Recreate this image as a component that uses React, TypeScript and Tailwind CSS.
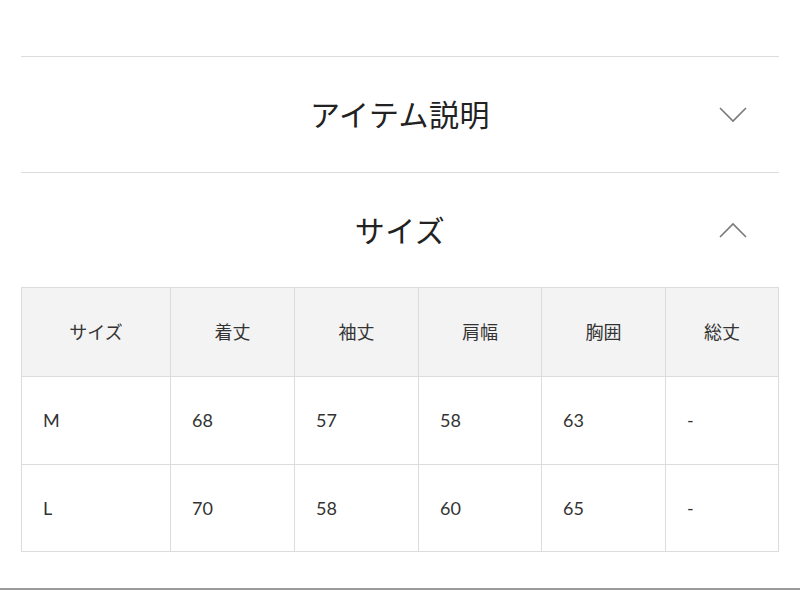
import React from "react";

const font = { fontFamily: 'Lato, "Noto Sans CJK JP", sans-serif' };

function Chevron({ up }: { up?: boolean }) {
  return (
    <svg width="28" height="16" viewBox="0 0 28 16" className="absolute right-[32px] top-1/2 -translate-y-1/2">
      {up ? (
        <polyline points="1,15 14,2 27,15" fill="none" stroke="#7a7a7a" strokeWidth="1.6" />
      ) : (
        <polyline points="1,1 14,14 27,1" fill="none" stroke="#7a7a7a" strokeWidth="1.6" />
      )}
    </svg>
  );
}

const headers = ["サイズ", "着丈", "袖丈", "肩幅", "胸囲", "総丈"];
const rows = [
  ["M", "68", "57", "58", "63", "-"],
  ["L", "70", "58", "60", "65", "-"],
];

export default function App() {
  return (
    <div className="w-[800px] h-[590px] bg-white flex flex-col overflow-hidden" style={font}>
      <div className="h-[56px]" />
      <div className="mx-[21px] border-t border-[#dcdcdc]">
        <div className="relative h-[115px] flex items-center justify-center">
          <span className="text-[30px] text-[#222] tracking-[0.5px]">アイテム説明</span>
          <Chevron />
        </div>
      </div>
      <div className="mx-[21px] border-t border-[#dcdcdc]">
        <div className="relative h-[114px] flex items-center justify-center">
          <span className="text-[30px] text-[#222] tracking-[0.5px]">サイズ</span>
          <Chevron up />
        </div>
        <div className="grid grid-cols-[149px_124px_124px_123px_124px_1fr] border-l border-t border-[#dcdcdc] text-[18px] text-[#333]">
          {headers.map((h) => (
            <div key={h} className="h-[89px] bg-[#f3f3f3] border-r border-b border-[#dcdcdc] flex items-center justify-center">
              {h}
            </div>
          ))}
          {rows.map((r, i) =>
            r.map((c, j) => (
              <div
                key={`${i}-${j}`}
                className={`${i === 0 ? "h-[88px]" : "h-[87px]"} bg-white border-r border-b border-[#dcdcdc] flex items-center pl-[21px]`}
              >
                {c}
              </div>
            ))
          )}
        </div>
      </div>
      <div className="flex-1" />
      <div className="h-[2px] bg-[#9a9a9a]" />
    </div>
  );
}
